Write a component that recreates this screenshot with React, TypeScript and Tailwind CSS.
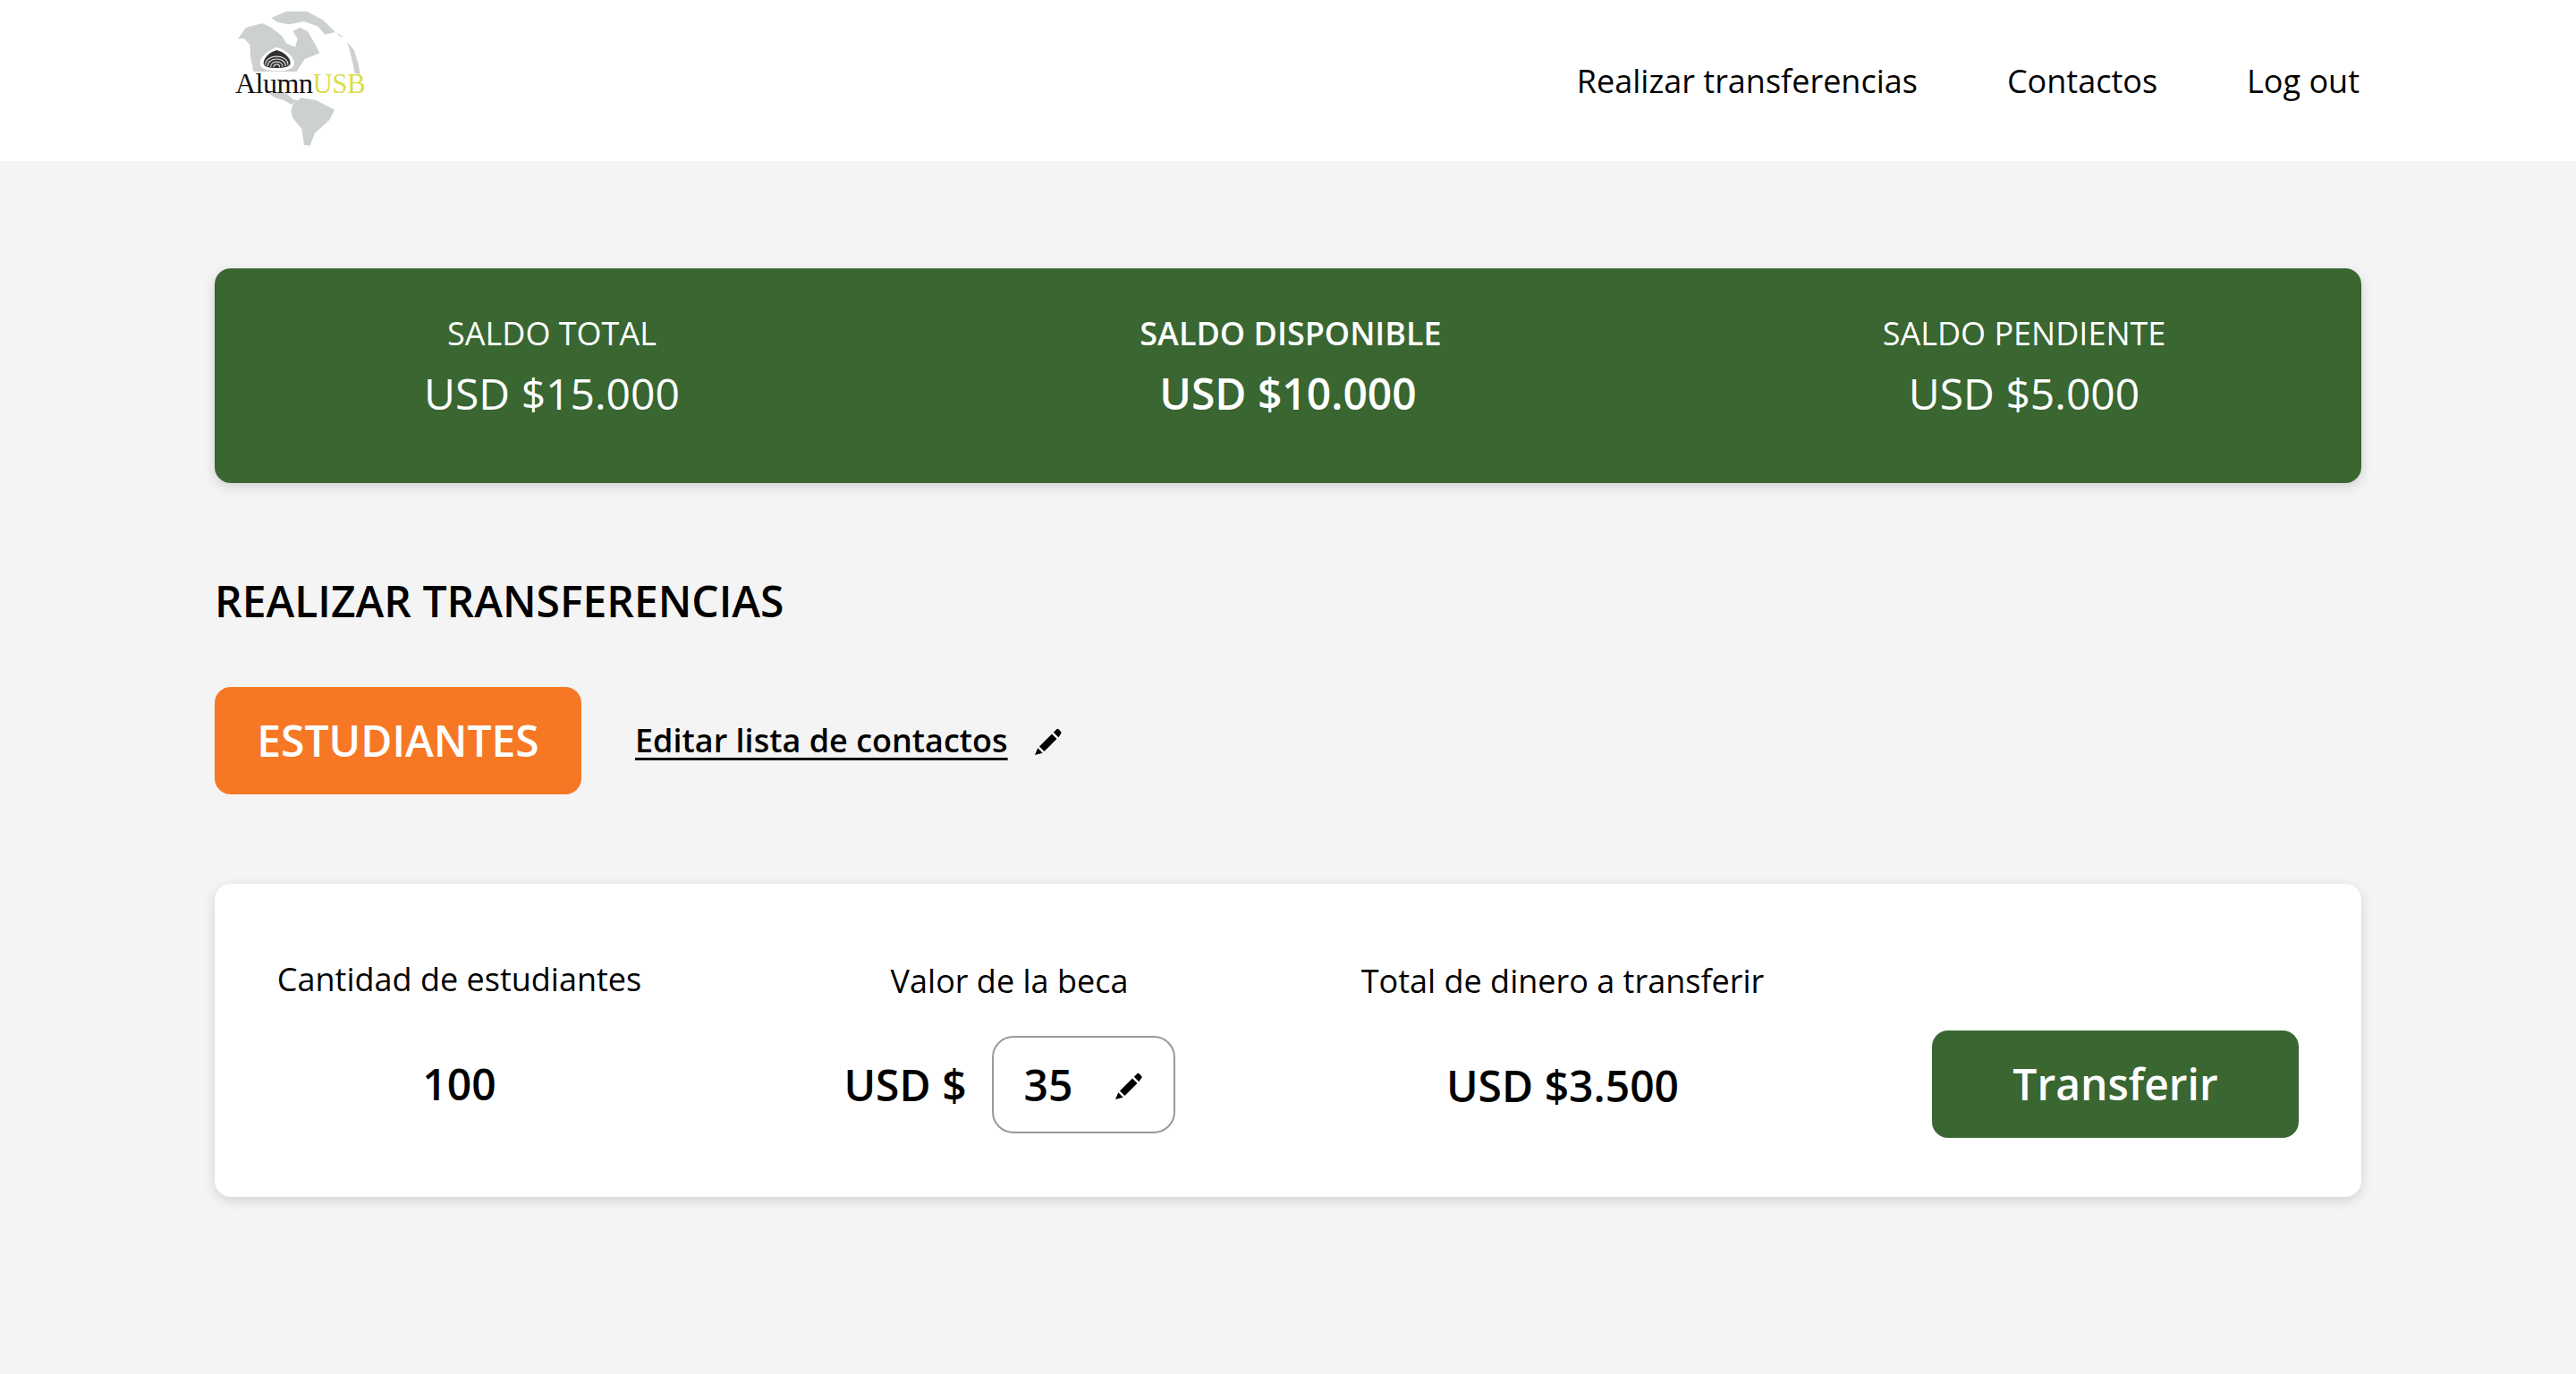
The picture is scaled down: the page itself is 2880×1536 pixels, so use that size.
function Pencil({ className }: { className?: string }) {
  return (
    <svg viewBox="0 0 32 32" className={className} fill="currentColor">
      <path d="M5 22.5 L19 8.5 L24.5 14 L10.5 28 Z" />
      <path d="M20.8 6.7 L24 3.5 a2 2 0 0 1 2.8 0 L29 5.7 a2 2 0 0 1 0 2.8 L26.3 12.2 Z" />
      <path d="M3.3 24.3 L8.7 29.7 L0 32 Z" />
    </svg>
  );
}

function Logo() {
  return (
    <div className="relative w-[240px] h-[180px] ml-[-20px]">
      {/* Globe silhouette */}
      <svg viewBox="0 0 720 540" className="absolute inset-0 w-full h-full" fill="#cdd0d1">
        <path d="M138 130 L165 92 L220 78 L250 92 L285 120 L300 145 L330 158 L338 130 L322 105 L345 92 L372 105 L398 150 L412 178 L388 188 L362 198 L335 240 L190 240 L180 190 L178 150 L160 130 Z" />
        <path d="M250 60 L300 38 L370 38 L425 68 L465 108 L430 116 L405 88 L360 72 L310 82 L270 74 Z" />
        <path d="M470 110 L492 124 L480 122 Z M505 140 L528 170 L542 215 L548 250 L530 245 L518 190 Z" />
        <path d="M240 312 L300 312 L322 332 L342 338 L318 350 L290 335 L262 328 Z" />
        <path d="M322 352 L350 328 L400 336 L462 368 L445 402 L420 425 L396 446 L380 488 L360 486 L352 432 L322 396 L316 370 Z" />
      </svg>
      <svg viewBox="0 0 720 540" className="absolute inset-0 w-full h-full">
        <path d="M268 158 C300 168 327 190 327 212 C327 230 300 238 268 238 C236 238 212 230 212 212 C212 190 240 168 268 158 Z" fill="#fff" />
        <path d="M268 168 C296 176 314 195 314 212 C314 222 296 228 268 228 C240 228 224 222 224 212 C224 195 242 176 268 168 Z" fill="#333" />
        <path d="M230 218 C230 180 306 180 306 218 M238 222 C238 190 298 190 298 222 M248 224 C248 202 288 202 288 224 M258 226 C258 212 278 212 278 226" fill="none" stroke="#ddd" strokeWidth="3.5" />
      </svg>
      <span className="absolute left-[43px] top-[74px] font-['Liberation_Serif',serif] text-[32px] tracking-[-0.5px] leading-[38px] whitespace-nowrap text-[#111]">
        Alumn<span className="text-[#dcdc4a] text-[31px]">USB</span>
      </span>
    </div>
  );
}

function Balance({ label, value, bold }: { label: string; value: string; bold?: boolean }) {
  return (
    <div className={`flex flex-col items-center ${bold ? "font-semibold" : "font-normal"}`}>
      <span className={`text-[36px] leading-[50px] mt-[2px] ${bold ? "pl-[6px]" : ""}`}>{label}</span>
      <span className="text-[48px] leading-[66px] mt-[9px]">{value}</span>
    </div>
  );
}

export default function App() {
  return (
    <div className="min-h-[1536px] bg-[#f4f4f4] font-['Open_Sans',sans-serif] text-black">
      <header className="h-[180px] bg-white pl-[240px] pr-[242px] flex items-center justify-between">
        <Logo />
        <nav className="flex items-center gap-[100px] text-[36px] leading-[50px] pt-[1px]">
          <a>Realizar transferencias</a>
          <a>Contactos</a>
          <a>Log out</a>
        </nav>
      </header>

      <main className="px-[240px] pt-[120px]">
        <section className="h-[240px] rounded-[18px] bg-[#396631] text-white shadow-[0_4px_14px_rgba(0,0,0,0.14)] grid grid-cols-3 gap-x-[69px] pt-[46px]">
          <Balance label="SALDO TOTAL" value="USD $15.000" />
          <Balance label="SALDO DISPONIBLE" value="USD $10.000" bold />
          <Balance label="SALDO PENDIENTE" value="USD $5.000" />
        </section>

        <h1 className="mt-[99px] text-[48px] leading-[66px] font-semibold">REALIZAR TRANSFERENCIAS</h1>

        <div className="mt-[63px] flex items-center">
          <button className="w-[410px] h-[120px] rounded-[18px] bg-[#f67825] text-white text-[48px] font-semibold">
            ESTUDIANTES
          </button>
          <a className="ml-[60px] text-[36px] font-semibold underline underline-offset-[6px] decoration-[3px]">
            Editar lista de contactos
          </a>
          <Pencil className="ml-[30px] w-[32px] h-[32px]" />
        </div>

        <section className="mt-[100px] h-[350px] rounded-[18px] bg-white shadow-[0_4px_14px_rgba(0,0,0,0.14)] flex px-[70px]">
          <div className="w-[407px] flex flex-col items-center">
            <span className="mt-[82px] text-[36px] leading-[50px] whitespace-nowrap">Cantidad de estudiantes</span>
            <span className="mt-[59px] text-[48px] leading-[66px] font-semibold">100</span>
          </div>

          <div className="ml-[227px] w-[369px] flex flex-col items-center">
            <span className="mt-[84px] text-[36px] leading-[50px] whitespace-nowrap">Valor de la beca</span>
            <div className="mt-[36px] flex items-center">
              <span className="text-[48px] leading-[66px] font-semibold whitespace-nowrap">USD $</span>
              <div className="ml-[28px] w-[205px] h-[109px] rounded-[24px] border-2 border-[#999] flex items-center justify-between pl-[34px] pr-[33px]">
                <span className="text-[48px] font-semibold">35</span>
                <Pencil className="w-[32px] h-[32px]" />
              </div>
            </div>
          </div>

          <div className="ml-[211px] w-[446px] flex flex-col items-center">
            <span className="mt-[84px] text-[36px] leading-[50px] whitespace-nowrap">Total de dinero a transferir</span>
            <span className="mt-[59px] text-[48px] leading-[66px] font-semibold">USD $3.500</span>
          </div>

          <button className="ml-[190px] mt-[164px] w-[410px] h-[120px] rounded-[18px] bg-[#396631] text-white text-[48px] font-semibold">
            Transferir
          </button>
        </section>
      </main>
    </div>
  );
}
